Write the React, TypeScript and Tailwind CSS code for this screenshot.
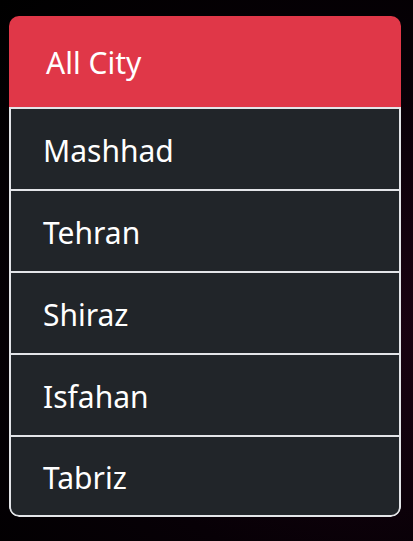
const cities = ['Mashhad', 'Tehran', 'Shiraz', 'Isfahan', 'Tabriz']

export default function App() {
  return (
    <div className="h-[541px] w-[413px] overflow-hidden bg-[radial-gradient(ellipse_at_90%_60%,#1a0312_0%,#070006_55%,#000000_100%)] pt-[16px] pl-[9px]">
      <ul className="w-[392px] overflow-hidden rounded-[10px] font-['Noto_Sans','Open_Sans',sans-serif] text-[30px] leading-none text-white">
        <li className="flex h-[91px] items-center bg-[#e03748] pt-[3px] pl-[37px]">All City</li>
        {cities.map((c, i) => (
          <li
            key={c}
            className={`flex h-[82px] items-center border-x-2 border-t-2 border-[#e3e5e8] bg-[#212529] pt-[3px] pl-[32px] ${
              i === cities.length - 1 ? 'rounded-b-[10px] border-b-2' : ''
            }`}
          >
            {c}
          </li>
        ))}
      </ul>
    </div>
  )
}
